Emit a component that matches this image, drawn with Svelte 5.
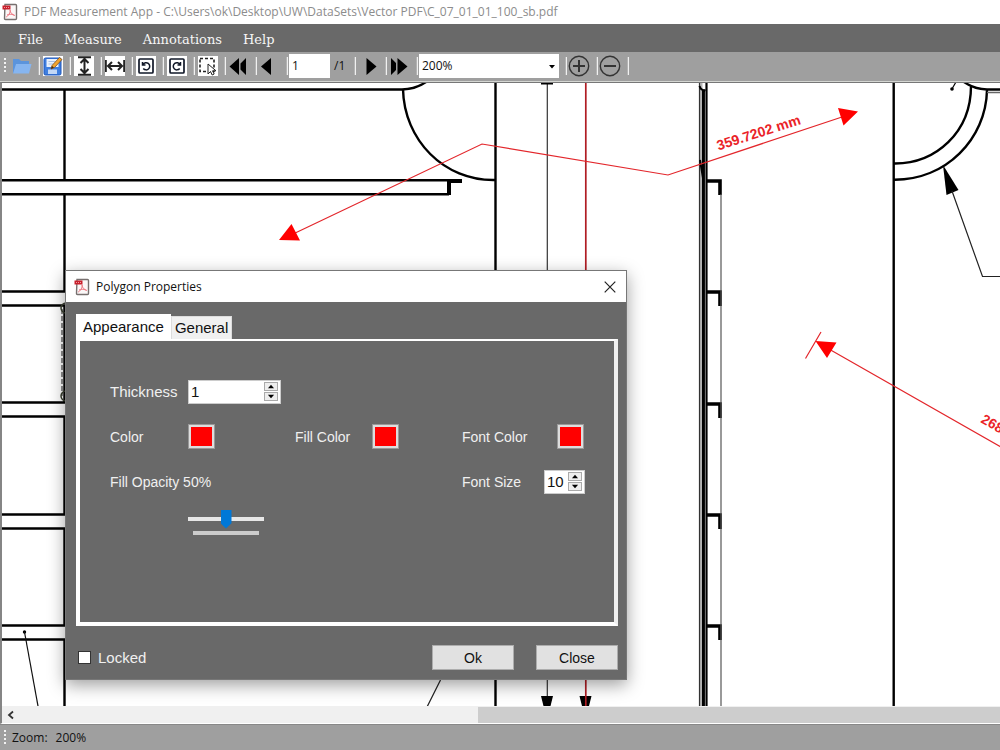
<script>
  let page = $state('1');
  let zoom = $state('200%');
  let thickness = $state(1);
  let fontSize = $state(10);
  let opacity = $state(50);
  let locked = $state(false);
  let tab = $state('Appearance');

  const menus = ['File', 'Measure', 'Annotations', 'Help'];
  const shelves = [180, 291, 402, 514, 625];
  const brackets = [181, 292, 404, 515, 626];
</script>

{#snippet pdfIcon()}
  <svg class="pdf" viewBox="0 0 16 18" aria-hidden="true">
    <path d="M3 1.500h10.500q1 0 1 1v13q0 1-1 1H3.500q-1 0-1-1z" fill="#fbf7f7" stroke="#77706f" stroke-width="1.400" />
    <path d="M0.500 2.500h8v4h-8z" fill="#c8202c" />
    <path d="M2 4.500h1M4 4.500h1M6 4.500h1" stroke="#ef9aa0" />
    <path d="M8 6.500c1 3-2 7-4 7.500M8 7c0 3 3 5 5 5.500M5 12c2-1 4-1 7 0" fill="none" stroke="#ee7a84" stroke-width="1" />
  </svg>
{/snippet}

{#snippet spinner(up, down)}
  <span class="steps">
    <button type="button" aria-label="Increase" onclick={up}><svg viewBox="0 0 12 8"><path d="M2.500 6 6 2l3.500 4z" /></svg></button>
    <button type="button" aria-label="Decrease" onclick={down}><svg viewBox="0 0 12 8"><path d="M2.500 2 6 6l3.500-4z" /></svg></button>
  </span>
{/snippet}

<div class="app">
  <header class="title">
    {@render pdfIcon()}
    <span>PDF Measurement App - C:\Users\ok\Desktop\UW\DataSets\Vector PDF\C_07_01_01_100_sb.pdf</span>
  </header>

  <nav class="menu">
    {#each menus as m}<button type="button">{m}</button>{/each}
  </nav>

  <div class="toolbar" role="toolbar" aria-label="Tools">
    <span class="grip"></span>
    <button class="tool" type="button" aria-label="Open">
      <svg viewBox="0 0 20 20"><path d="M1 3h6l2 2h8v12H1z" fill="#5b94dc" /><path d="M4 8h15.500L17 17.500H1z" fill="#86b5f0" /></svg>
    </button>
    <i class="sep"></i>
    <button class="tool plate" type="button" aria-label="Save">
      <svg viewBox="0 0 20 20"><rect x="1" y="2" width="17" height="17" rx="1.500" fill="#3f7fe0" stroke="#2258b8" /><path d="M3.500 3h12v8h-12z" fill="#e9f1fc" /><path d="M5 13.500h9V18H5z" fill="#c3d8f6" /><path d="M5.500 5.500h7M5.500 8h5" stroke="#a9c0e2" /><path d="M8 13l1-3.500L16.500 1.500l2.500 2-7.500 8z" fill="#f3a52e" stroke="#80501c" stroke-width=".8" /><path d="M8 13l1-3 2 1.500z" fill="#40291a" /></svg>
    </button>
    <i class="sep"></i>
    <button class="tool plate" type="button" aria-label="Measure height">
      <svg viewBox="0 0 20 20"><path d="M4 1.200h13M4 18.800h13M10.500 3v14M6.500 7l4-4 4 4M6.500 13l4 4 4-4" fill="none" stroke="#222" stroke-width="2" /></svg>
    </button>
    <i class="sep"></i>
    <button class="tool plate" type="button" aria-label="Measure width">
      <svg viewBox="0 0 20 20"><path d="M.8 4v12M19.200 4v12M3 10h14M7 6l-4 4 4 4M13 6l4 4-4 4" fill="none" stroke="#222" stroke-width="2" /></svg>
    </button>
    <i class="sep"></i>
    <button class="tool plate" type="button" aria-label="Rotate left">
      <svg viewBox="0 0 20 20" fill="none" stroke="#111828" stroke-width="1.700"><rect x="3" y="3" width="14" height="14" rx="1" /><path d="M6.500 6v3h3M7 8.500a3.600 3.600 0 1 1 .3 4" stroke-width="1.500" /></svg>
    </button>
    <i class="sep"></i>
    <button class="tool plate" type="button" aria-label="Rotate right">
      <svg viewBox="0 0 20 20" fill="none" stroke="#111828" stroke-width="1.700"><rect x="3" y="3" width="14" height="14" rx="1" /><path d="M13.500 6v3h-3M13 8.500a3.600 3.600 0 1 0-.3 4" stroke-width="1.500" /></svg>
    </button>
    <i class="sep"></i>
    <button class="tool plate" type="button" aria-label="Select area">
      <svg viewBox="0 0 20 20"><path d="M2 2.500h14v13H2z" fill="none" stroke="#222" stroke-width="1.600" stroke-dasharray="3 2" /><path d="M10 8v10l2.500-2.500 1.700 3.500 2-1-1.700-3.200h3.500z" fill="#fff" stroke="#222" /></svg>
    </button>
    <i class="sep"></i>
    <button class="tool" type="button" aria-label="First page"><svg viewBox="0 0 20 20"><path d="M.5 10.500 10 2v17zM11.500 7.500 17 2v17l-5.500-5.500z" /></svg></button>
    <i class="sep"></i>
    <button class="tool" type="button" aria-label="Previous page"><svg viewBox="0 0 20 20"><path d="M1 10.500 11 2v17z" /></svg></button>
    <i class="sep tight"></i>
    <input class="page" aria-label="Page" bind:value={page} />
    <span class="count">/1</span>
    <i class="sep"></i>
    <button class="tool" type="button" aria-label="Next page"><svg viewBox="0 0 20 20"><path d="M17.500 10.500 7.500 2v17z" /></svg></button>
    <i class="sep"></i>
    <button class="tool" type="button" aria-label="Last page"><svg viewBox="0 0 20 20"><path d="M17.500 10.500 7.500 2v17zM1 2l5 5v7l-5 5z" /></svg></button>
    <i class="sep tight"></i>
    <span class="combo">
      <select aria-label="Zoom level" bind:value={zoom}>
        <option>100%</option><option>200%</option><option>400%</option>
      </select>
      <svg viewBox="0 0 8 5" aria-hidden="true"><path d="M1 1h6L4 4.500z" /></svg>
    </span>
    <i class="sep tight"></i>
    <button class="tool round" type="button" aria-label="Zoom in"><svg viewBox="0 0 22 22" fill="none" stroke="#333" stroke-width="1.400"><circle cx="11" cy="11" r="9.700" /><path d="M5 11h12M11 5v12" stroke-width="2" /></svg></button>
    <i class="sep tight"></i>
    <button class="tool round" type="button" aria-label="Zoom out"><svg viewBox="0 0 22 22" fill="none" stroke="#333" stroke-width="1.400"><circle cx="11" cy="11" r="9.700" /><path d="M5 11h12" stroke-width="2" /></svg></button>
    <i class="sep"></i>
  </div>

  <main class="canvas">
    <svg class="drawing" aria-label="Drawing">
      <g transform="translate(-2 -83)" fill="none" stroke="#000" stroke-width="2.400">
        <path d="M0 89.500H402Q416 89 426 82" />
        <path d="M64.500 89V180M64.500 194V291M64.500 305V402M64.500 416V514M64.500 528V625M64.500 639V1400" />
        <path d="M0 180.300H462M0 194.300H449" />
        <path d="M462 181H449V195" stroke-width="4" />
        {#each shelves.slice(1) as y}
          <path d="M0 {y + 0.5}H65.500M0 {y + 14.5}H65.500" />
        {/each}
        <path d="M62 309V396" stroke="#444" stroke-width="1.200" stroke-dasharray="5 2" />
        <path d="M66 303a5 5 0 0 0 0 10M66 391a5 5 0 0 0 0 10" stroke="#3a4030" stroke-width="1.500" />
        <path d="M403 89C404 140 444 181 495 180" />
        <path d="M495.500 82V1400M893.700 82V1400" />
        <path d="M547.300 82V700" stroke="#333" stroke-width="1.200" />
        <path d="M541 83h12" stroke-width="3" />
        <path d="M541 696h12l-3 12h-6zM579.500 696h12l-3 12h-6z" fill="#000" stroke="none" />
        <path d="M585.800 82V1400" stroke="#b01d24" stroke-width="1.700" />
        <path d="M440.500 680 427 707" stroke="#222" stroke-width="1.200" />
        <circle cx="24.500" cy="632" r="1.700" fill="#000" stroke="none" />
        <path d="M24.500 632 38 706" stroke="#111" stroke-width="1.200" />

        <path d="M701 82V1400" stroke="#b4b4b4" stroke-width="3" />
        <path d="M699.500 82V1400" stroke="#333" stroke-width="1.200" />
        <path d="M703.500 90V1400" stroke-width="3" />
        <path d="M706.500 82V1400" stroke-width="2.200" />
        <path d="M705.300 92V1400" stroke="#777" stroke-width=".6" />
        <path d="M699.500 86q1.500 5 6 4M700 160l3 18" stroke-width="2" />
        {#each brackets as y}
          <path d="M707 {y}H720V{y + 14}" stroke-width="3.600" />
        {/each}
        <path d="M721 194V1400" stroke="#555" stroke-width="1.200" />

        <path d="M894 163.500C936 164 971 132 971 86M894 179.700C946 180 986 139 987 90M964 82Q974 89 987 89.500H1600" />
        <path d="M987 92.500H1600" stroke="#666" stroke-width="1.500" />
        <path d="M956 82 952.500 88" stroke-width="1.200" />
        <circle cx="952" cy="89" r="1.800" fill="#000" stroke="none" />
        <path d="M943 165 946.500 195 958.500 190z" fill="#000" stroke="none" />
        <path d="M952 191 982.500 276.500H1600" stroke="#222" stroke-width="1.200" />

        <g stroke="#e3262b" stroke-width="1.200">
          <path d="M291 235 482 144 668 175 845 116" />
          <path d="M821 332 805.500 358.500M828 348.500 1000 446.500 1300 617" />
        </g>
        <g fill="#f00" stroke="none">
          <path d="M279 240 291.500 224 300 240.500zM858 111.500 838 108 843.500 125.500zM815.500 341 836.500 342.500 827 358z" />
          <g fill="#ea2328" class="measure">
            <text transform="translate(718.500 150.500) rotate(-17.800)">359.7202 mm</text>
            <text transform="translate(980 422) rotate(29.700)">268</text>
          </g>
        </g>
      </g>
    </svg>

    <section class="dialog" role="dialog" aria-label="Polygon Properties">
      <div class="caption">
        {@render pdfIcon()}
        <span>Polygon Properties</span>
        <button type="button" aria-label="Close window">
          <svg viewBox="0 0 12 12"><path d="M.7.7l10.600 10.600M11.300.7.7 11.300" stroke="#222" stroke-width="1.200" /></svg>
        </button>
      </div>
      <div class="content">
        <div class="tabs" role="tablist">
          {#each ['Appearance', 'General'] as t}
            <button type="button" role="tab" aria-selected={tab === t} class:active={tab === t} onclick={() => (tab = t)}>{t}</button>
          {/each}
        </div>
        <div class="panel" role="tabpanel">
          <label class="large" for="thickness">Thickness</label>
          <span class="spin wide">
            <input id="thickness" type="number" bind:value={thickness} />
            {@render spinner(() => thickness++, () => thickness--)}
          </span>

          <label class="c1" for="color">Color</label>
          <button id="color" class="swatch" type="button" aria-label="Color"></button>
          <label for="fill">Fill Color</label>
          <button id="fill" class="swatch" type="button" aria-label="Fill Color"></button>
          <label for="fontcolor">Font Color</label>
          <button id="fontcolor" class="swatch end" type="button" aria-label="Font Color"></button>

          <label class="c1 span" for="opacity">Fill Opacity {opacity}%</label>
          <label class="c5" for="fontsize">Font Size</label>
          <span class="spin">
            <input id="fontsize" type="number" bind:value={fontSize} />
            {@render spinner(() => fontSize++, () => fontSize--)}
          </span>

          <div class="slider">
            <input id="opacity" type="range" min="0" max="100" bind:value={opacity} />
            <span class="ticks"></span>
          </div>
        </div>
        <footer>
          <label class="check large"><input type="checkbox" bind:checked={locked} />Locked</label>
          <button class="push" type="button">Ok</button>
          <button class="push" type="button">Close</button>
        </footer>
      </div>
    </section>
  </main>

  <div class="scroll">
    <button type="button" aria-label="Scroll left"><svg viewBox="0 0 8 10"><path d="M6 1.500 2 5l4 3.500" fill="none" stroke="#333" stroke-width="1.800" /></svg></button>
    <span class="thumb"></span>
  </div>
  <div class="status"><span class="grip"></span><span>Zoom:</span><output>{zoom}</output></div>
</div>

<style>
  :global(body) { margin: 0; }
  * { box-sizing: border-box; }
  svg { display: block; }
  button, input, select { font: inherit; color: inherit; margin: 0; padding: 0; border: 0; border-radius: 0; background: none; }
  input:focus, button:focus { outline: none; }

  .app {
    height: 100vh;
    display: flex;
    flex-direction: column;
    background: #fff;
    font: 12px/16px "Open Sans", "Noto Sans", sans-serif;
    color: #111;
  }
  .pdf { width: 16px; height: 18px; flex: none; }
  .title { display: flex; align-items: center; gap: 6px; height: 24px; padding-left: 2px; color: #8c8c8c; white-space: nowrap; overflow: hidden; flex: none; }
  .menu { display: flex; align-items: center; gap: 21px; height: 28px; padding: 3px 0 0 18px; background: #696969; flex: none; }
  .menu button { color: #f6f6f6; font: 13px/20px "DejaVu Serif", serif; }

  .toolbar { display: flex; align-items: center; height: 30px; padding: 0 4px 2px; background: #9f9f9f; border-bottom: 1px solid #d4d6d2; flex: none; }
  .grip { width: 2px; height: 16px; margin-right: 6px; background: repeating-linear-gradient(#f2f2f2 0 2px, transparent 2px 4px); }
  .tool { width: 20px; height: 20px; flex: none; }
  .tool svg { width: 100%; height: 100%; }
  .plate { background: #fff; }
  .round { width: 22px; height: 22px; }
  .sep { width: 2px; height: 18px; margin: 0 3px 0 6px; background: #f0f0f0; border-left: 1px solid #b4b4b4; flex: none; }
  .sep.tight { margin-right: 1px; }
  .page { width: 41px; height: 24px; padding-left: 3px; background: #fff; }
  .count { width: 18px; padding-left: 4px; }
  .combo { position: relative; width: 140px; height: 24px; background: #fff; }
  .combo select { appearance: none; width: 100%; height: 100%; padding-left: 3px; outline: none; }
  .combo svg { position: absolute; right: 3px; top: 10px; width: 8px; height: 5px; pointer-events: none; }

  .canvas { position: relative; flex: 1; min-height: 0; overflow: hidden; border-left: 2px solid #858585; border-top: 1px solid #777; background: #fff; }
  .drawing { width: 100%; height: 100%; }
  .measure { font: bold 14px "Liberation Sans", Arial, sans-serif; }

  .dialog {
    position: absolute;
    left: 63px;
    top: 187px;
    width: 562px;
    display: flex;
    flex-direction: column;
    border: 1px solid #777;
    background: #696969;
    box-shadow: 0 5px 16px rgba(0, 0, 0, 0.38);
  }
  .caption { display: flex; align-items: center; gap: 6px; height: 31px; padding: 0 10px 0 8px; background: #fff; }
  .caption button { margin-left: auto; width: 12px; height: 12px; }
  .content { padding: 12px 8px 9px 10px; font: 14px/18px "Liberation Sans", Arial, sans-serif; color: #f0f0f0; }
  .large, .tabs { font-size: 15px; }
  .tabs { display: flex; align-items: flex-end; }
  .tabs button { height: 23px; padding: 0 3px; background: #f0f0f0; border: 1px solid #dcdcdc; border-bottom: 0; color: #111; }
  .tabs .active { height: 25px; padding: 0 6px; background: #fff; border-color: #fff; }
  .panel {
    display: grid;
    grid-template-columns: 78px 107px 77px 90px 82px 40px;
    grid-template-rows: 45px 45px 45px auto;
    align-items: center;
    min-height: 287px;
    align-content: start;
    padding: 28px 0 0 30px;
    border: solid #fff;
    border-width: 2px 4px 4px;
    border-right-color: #f0f0f0;
  }
  .c1 { grid-column: 1; }
  .span { grid-column: 1 / span 2; }
  .c5 { grid-column: 5; }
  .swatch { width: 27px; height: 25px; background: #f00; border: 3px solid #ddd; outline: 1px solid #999; outline-offset: -1px; }
  .end { justify-self: end; }
  .spin { display: flex; align-items: center; width: 41px; height: 24px; padding-right: 2px; background: #fff; border: 1px solid #ccc; color: #111; }
  .wide { width: 93px; }
  .spin input { flex: 1; min-width: 0; padding-left: 2px; appearance: textfield; font-size: 15px; }
  .spin input::-webkit-inner-spin-button { appearance: none; display: none; }
  .steps { display: grid; gap: 1px; width: 14px; }
  .steps button { height: 9px; background: #eee; border: 1px solid #aaa; }
  .steps svg { width: 12px; height: 7px; }
  .slider { grid-column: 2; display: grid; justify-items: center; width: 76px; padding-top: 5px; }
  .slider input { appearance: none; width: 76px; height: 20px; background: linear-gradient(#e7e7e7, #e7e7e7) center / 100% 4px no-repeat; }
  .slider input::-webkit-slider-thumb { appearance: none; width: 11px; height: 19px; background: #0078d7; clip-path: polygon(0 0, 100% 0, 100% 72%, 50% 100%, 0 72%); }
  .ticks { width: 66px; height: 4px; margin-top: 2px; background: #ccc; }
  footer { display: flex; align-items: center; gap: 22px; margin-top: 19px; }
  .check { display: flex; align-items: center; gap: 7px; margin-right: auto; padding-left: 2px; }
  .check input { appearance: none; width: 13px; height: 13px; background: #fff; border: 1px solid #333; }
  .check input:checked { box-shadow: inset 0 0 0 3px #fff; background: #333; }
  .push { width: 82px; height: 25px; background: #e1e1e1; border: 1px solid #adadad; color: #111; }

  .scroll { display: flex; align-items: center; height: 18px; background: #f0f0f0; border-left: 2px solid #858585; border-bottom: 1px solid #fff; flex: none; }
  .scroll button { width: 17px; height: 17px; display: grid; place-items: center; }
  .scroll svg { width: 8px; height: 10px; }
  .thumb { width: 52.300%; height: 16px; margin-left: auto; background: #cdcdcd; }
  .status { display: flex; align-items: center; height: 26px; padding-left: 4px; background: #9f9f9f; border-top: 1px solid #888; flex: none; }
  .status output { margin-left: 8px; }
</style>
